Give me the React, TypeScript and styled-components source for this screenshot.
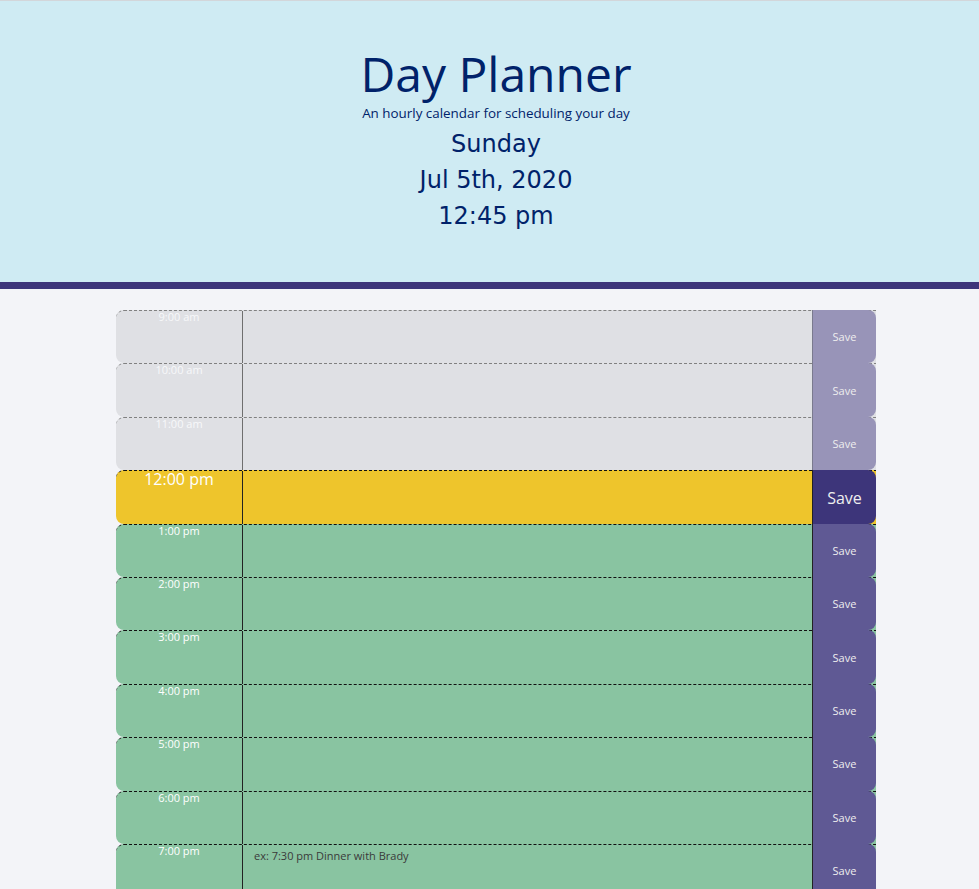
import React from "react";
import styled, { createGlobalStyle } from "styled-components";

const Global = createGlobalStyle`
  html, body { margin: 0; padding: 0; }
  body {
    background: #f3f4f8;
    font-family: "Open Sans", "Noto Sans", sans-serif;
  }
  * { box-sizing: border-box; }
`;

const Header = styled.header`
  height: 289px;
  background: #cfebf3;
  border-top: 1px solid #d3d6da;
  border-bottom: 7px solid #3d357a;
  color: #00226a;
  display: flex;
  flex-direction: column;
  align-items: center;
  padding: 46px 0 0 13px;
`;

const Title = styled.h1`
  margin: 0;
  font-family: "Open Sans", sans-serif;
  font-weight: 400;
  font-size: 48px;
  line-height: 54px;
`;

const Lead = styled.p`
  margin: 3px 0 4px;
  font-size: 13.4px;
  line-height: 18px;
`;

const DateLine = styled.div`
  font-family: "DejaVu Sans", sans-serif;
  font-size: 24px;
  line-height: 36px;
`;

const Main = styled.main`
  padding: 21px 0 0 116px;
`;

const Planner = styled.div`
  width: 760px;
  display: flex;
  flex-direction: column;
`;

type Status = "past" | "present" | "future";

const rowBg: Record<Status, string> = {
  past: "#dfe0e4",
  present: "#eec52c",
  future: "#89c4a1",
};
const saveBg: Record<Status, string> = {
  past: "#9894b8",
  present: "#3d357a",
  future: "#5f5994",
};

const Row = styled.div<{ $s: Status }>`
  display: flex;
  height: 53.4px;
  border-top: 1px dashed ${(p) => (p.$s === "past" ? "#808080" : "#111")};
  border-radius: 8px 0 0 8px;
  background: ${(p) => rowBg[p.$s]};
`;

const Hour = styled.div<{ $s: Status }>`
  width: 126px;
  flex: none;
  text-align: center;
  color: ${(p) => (p.$s === "past" ? "#f7f8fa" : "#ffffff")};
  font-size: ${(p) => (p.$s === "present" ? "16px" : "11px")};
  line-height: ${(p) => (p.$s === "present" ? "17px" : "11px")};
`;

const Note = styled.textarea<{ $s: Status }>`
  flex: 1;
  height: 100%;
  margin: 0;
  border: none;
  border-left: 1px solid ${(p) => (p.$s === "past" ? "#6f6f6f" : "#222")};
  background: transparent;
  resize: none;
  padding: 3px 11px;
  font-family: "Open Sans", sans-serif;
  font-size: 11px;
  line-height: 15px;
  color: #333;
  outline: none;
  &::placeholder { color: #3a3a3a; opacity: 1; }
`;

const Save = styled.button<{ $s: Status }>`
  width: 64px;
  flex: none;
  margin: -1px 0 0;
  height: calc(100% + 1px);
  border: none;
  border-left: 1px solid ${(p) => (p.$s === "past" ? "#7a7a8e" : "#222")};
  border-radius: 0 8px 8px 0;
  background: ${(p) => saveBg[p.$s]};
  color: #eeeeee;
  font-family: "Open Sans", sans-serif;
  font-size: ${(p) => (p.$s === "present" ? "16px" : "11px")};
  padding: ${(p) => (p.$s === "present" ? "3px 0 0" : "0")};
`;

const hours = [
  "9:00 am", "10:00 am", "11:00 am", "12:00 pm", "1:00 pm", "2:00 pm",
  "3:00 pm", "4:00 pm", "5:00 pm", "6:00 pm", "7:00 pm",
];

export default function App() {
  return (
    <>
      <Global />
      <Header>
        <Title>Day Planner</Title>
        <Lead>An hourly calendar for scheduling your day</Lead>
        <DateLine>Sunday</DateLine>
        <DateLine>Jul 5th, 2020</DateLine>
        <DateLine>12:45 pm</DateLine>
      </Header>
      <Main>
        <Planner>
          {hours.map((h, i) => {
            const s: Status = i < 3 ? "past" : i === 3 ? "present" : "future";
            return (
              <Row key={h} $s={s}>
                <Hour $s={s}>{h}</Hour>
                <Note $s={s} placeholder={i === 10 ? "ex: 7:30 pm Dinner with Brady" : ""} />
                <Save $s={s}>Save</Save>
              </Row>
            );
          })}
        </Planner>
      </Main>
    </>
  );
}
